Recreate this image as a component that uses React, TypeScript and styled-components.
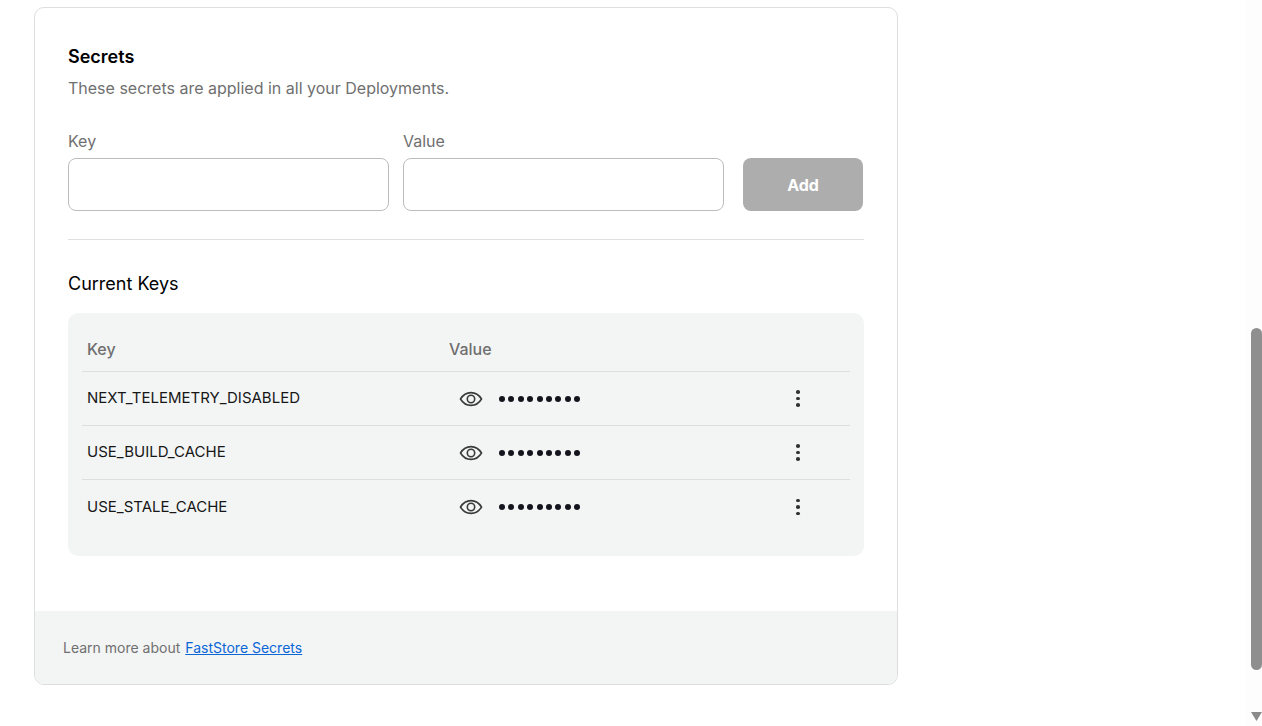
import { createGlobalStyle } from "styled-components";
import styled from "styled-components";

const GlobalStyle = createGlobalStyle`
  html, body {
    margin: 0;
    height: 100%;
    overflow: hidden;
    background: #fff;
  }
  * { box-sizing: border-box; }
  #root { height: 100%; }
`;

const Page = styled.div`
  position: relative;
  height: 726px;
  padding: 7px 0 0 34px;
  font-family: Inter, "Liberation Sans", sans-serif;
`;

const Card = styled.section`
  width: 864px;
  height: 678px;
  border: 1px solid #dddfdf;
  border-radius: 10px;
  overflow: hidden;
  display: flex;
  flex-direction: column;
`;

const Body = styled.div`
  flex: 1;
  padding: 36px 33px 0;
`;

const Title = styled.h2`
  margin: 0;
  font-size: 18px;
  line-height: 26px;
  font-weight: 600;
  color: #000;
`;

const Subtitle = styled.p`
  margin: 6px 0 0;
  font-size: 16px;
  line-height: 24px;
  color: #6f6f6f;
`;

const Form = styled.div`
  display: grid;
  grid-template-columns: 321px 321px 120px;
  column-gap: 14px;
  margin-top: 29px;
  align-items: end;
`;

const Field = styled.label`
  display: flex;
  flex-direction: column;
  gap: 5px;
  font-size: 16px;
  line-height: 24px;
  color: #6f6f6f;
`;

const Input = styled.input`
  height: 53px;
  width: 100%;
  border: 1px solid #bcbcbc;
  border-radius: 8px;
  background: #fff;
`;

const AddButton = styled.button`
  height: 53px;
  width: 120px;
  margin-left: 5px;
  border: 0;
  border-radius: 8px;
  background: #adadad;
  color: #fff;
  font-family: inherit;
  font-size: 16px;
  font-weight: 700;
`;

const Divider = styled.hr`
  margin: 28px 0 0;
  border: 0;
  border-top: 1px solid #e0e0e0;
`;

const SectionTitle = styled.h3`
  margin: 31px 0 0;
  font-size: 18px;
  line-height: 26px;
  font-weight: 400;
  color: #000;
`;

const TableBox = styled.div`
  margin-top: 16px;
  height: 243px;
  padding: 14px 14px 0;
  border-radius: 10px;
  background: #f3f5f5;
`;

const Row = styled.div<{ $head?: boolean }>`
  display: grid;
  grid-template-columns: 362px 1fr 54px;
  align-items: center;
  height: ${(p) => (p.$head ? "45px" : "54px")};
  padding-left: 5px;
  border-bottom: 1px solid #dddfdf;
  &:last-child {
    border-bottom: 0;
  }
`;

const HeadCell = styled.div`
  font-size: 16px;
  font-weight: 500;
  color: #6f6f6f;
`;

const KeyCell = styled.div`
  font-size: 15px;
  color: #171717;
  margin-top: -2px;
`;

const ValueCell = styled.div`
  display: flex;
  align-items: center;
  gap: 16px;
  padding-left: 10px;
`;

const Dots = styled.span`
  display: flex;
  gap: 3.4px;
`;

const Dot = styled.i`
  width: 6px;
  height: 6px;
  border-radius: 50%;
  background: #14141c;
`;

const MenuButton = styled.div`
  display: flex;
  flex-direction: column;
  gap: 3px;
  width: 4px;
`;

const MenuDot = styled.i`
  width: 3.6px;
  height: 3.6px;
  border-radius: 50%;
  background: #333;
`;

const Footer = styled.footer`
  height: 73px;
  padding: 0 28px;
  display: flex;
  align-items: center;
  gap: 5px;
  background: #f3f5f5;
  font-size: 14px;
  color: #6f6f6f;
`;

const DocLink = styled.a`
  color: #0b66d6;
  text-decoration: underline;
`;

const ScrollTrack = styled.div`
  position: absolute;
  top: 0;
  right: 0;
  bottom: 0;
  width: 16px;
  background: #fdfdfd;
`;

const ScrollThumb = styled.div`
  position: absolute;
  top: 328px;
  right: 0;
  width: 11px;
  height: 342px;
  border-radius: 6px 6px 6px 6px;
  background: #8f8f8f;
`;

const ScrollArrow = styled.svg`
  position: absolute;
  right: 0;
  bottom: 3px;
  width: 11px;
  height: 11px;
`;

const EyeIcon = () => (
  <svg width="24" height="24" viewBox="0 0 24 24" fill="none" stroke="#3a3a3a" strokeWidth="1.6">
    <path d="M1.5 12C4 7.8 7.6 5.6 12 5.6s8 2.2 10.5 6.4c-2.5 4.2-6.1 6.4-10.5 6.4S4 16.2 1.5 12Z" />
    <circle cx="12" cy="12" r="3.7" />
  </svg>
);

const keys = ["NEXT_TELEMETRY_DISABLED", "USE_BUILD_CACHE", "USE_STALE_CACHE"];

const App = () => {
  return (
    <Page>
      <GlobalStyle />
      <Card>
        <Body>
          <Title>Secrets</Title>
          <Subtitle>These secrets are applied in all your Deployments.</Subtitle>

          <Form>
            <Field>
              Key
              <Input />
            </Field>
            <Field>
              Value
              <Input />
            </Field>
            <AddButton>Add</AddButton>
          </Form>

          <Divider />

          <SectionTitle>Current Keys</SectionTitle>

          <TableBox>
            <Row $head>
              <HeadCell>Key</HeadCell>
              <HeadCell>Value</HeadCell>
            </Row>
            {keys.map((k) => (
              <Row key={k}>
                <KeyCell>{k}</KeyCell>
                <ValueCell>
                  <EyeIcon />
                  <Dots>
                    {Array.from({ length: 9 }).map((_, i) => (
                      <Dot key={i} />
                    ))}
                  </Dots>
                </ValueCell>
                <MenuButton>
                  <MenuDot />
                  <MenuDot />
                  <MenuDot />
                </MenuButton>
              </Row>
            ))}
          </TableBox>
        </Body>

        <Footer>
          Learn more about <DocLink href="#">FastStore Secrets</DocLink>
        </Footer>
      </Card>

      {/* fake browser scrollbar */}
      <ScrollTrack />
      <ScrollThumb />
      <ScrollArrow viewBox="0 0 11 11">
        <path d="M0 0h11L5.5 9Z" fill="#8a8a8a" />
      </ScrollArrow>
    </Page>
  );
};

export default App;
